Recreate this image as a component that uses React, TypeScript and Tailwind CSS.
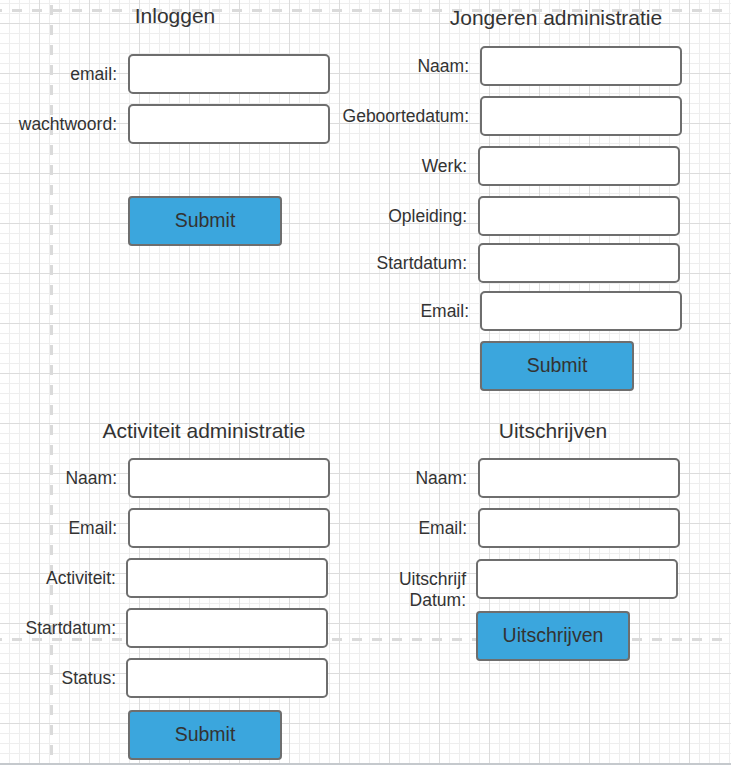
import React from "react";

function Field({ className = "" }: { className?: string }) {
  return (
    <div
      className={
        "h-[40px] w-[202px] shrink-0 rounded-[5px] border-2 border-[#6e6e6e] bg-white " +
        className
      }
    />
  );
}

function Row({
  label,
  labelClass,
  fieldClass,
  rowClass = "",
}: {
  label: string;
  labelClass: string;
  fieldClass: string;
  rowClass?: string;
}) {
  return (
    <div className={"flex items-center " + rowClass}>
      <div className={"shrink-0 text-right text-[17.5px] leading-[21px] text-[#333] " + labelClass}>
        {label}
      </div>
      <Field className={fieldClass} />
    </div>
  );
}

function Btn({ children, className = "" }: { children: React.ReactNode; className?: string }) {
  return (
    <div
      className={
        "flex h-[50px] w-[154px] items-center justify-center rounded-[4px] border-2 border-[#6e6e6e] bg-[#3ba6dd] text-[19.5px] text-[#333] " +
        className
      }
    >
      {children}
    </div>
  );
}

export default function App() {
  return (
    <div className="relative h-[765px] w-[731px] overflow-hidden bg-white font-['Liberation_Sans',Arial,sans-serif] bg-[image:linear-gradient(to_right,#dcdcdc_1px,transparent_1px),linear-gradient(to_bottom,#dcdcdc_1px,transparent_1px),linear-gradient(to_right,#eeeeee_1px,transparent_1px),linear-gradient(to_bottom,#eeeeee_1px,transparent_1px)] bg-[size:50px_50px,50px_50px,10px_10px,10px_10px] bg-[position:39px_23px,39px_23px,9px_3px,9px_3px]">
      {/* page boundary dashed lines */}
      <div className="absolute left-0 top-[9px] h-[3px] w-full bg-[image:linear-gradient(to_right,#dadada_50%,transparent_50%)] bg-[size:20px_3px] bg-[position:12px_0]" />
      <div className="absolute left-0 top-[638px] h-[3px] w-full bg-[image:linear-gradient(to_right,#dadada_50%,transparent_50%)] bg-[size:20px_3px] bg-[position:12px_0]" />
      <div className="absolute left-[50px] top-0 h-[763px] w-[3px] bg-[image:linear-gradient(to_bottom,#dadada_50%,transparent_50%)] bg-[size:3px_20px] bg-[position:0_5px]" />

      <div className="relative z-10 flex flex-col">
        {/* top row */}
        <div className="flex h-[410px]">
          {/* Inloggen */}
          <div className="flex w-[340px] flex-col">
            <div className="flex h-[32px] items-center justify-center pl-[10px] text-[21px] text-[#333]">
              Inloggen
            </div>
            <div className="mt-[22px] flex flex-col gap-[10px]">
              <Row label="email:" labelClass="w-[117px]" fieldClass="ml-[11px]" />
              <Row label="wachtwoord:" labelClass="w-[117px]" fieldClass="ml-[11px]" />
            </div>
            <Btn className="ml-[128px] mt-[52px]">Submit</Btn>
          </div>

          {/* Jongeren administratie */}
          <div className="flex w-[391px] flex-col">
            <div className="flex h-[36px] items-center justify-center pl-[41px] text-[21px] text-[#333]">
              Jongeren administratie
            </div>
            <div className="mt-[10px] flex flex-col">
              <Row label="Naam:" labelClass="w-[129px]" fieldClass="ml-[11px]" />
              <Row label="Geboortedatum:" labelClass="w-[129px]" fieldClass="ml-[11px]" rowClass="mt-[10px]" />
              <Row label="Werk:" labelClass="w-[127px]" fieldClass="ml-[11px]" rowClass="mt-[10px]" />
              <Row label="Opleiding:" labelClass="w-[127px]" fieldClass="ml-[11px]" rowClass="mt-[10px]" />
              <Row label="Startdatum:" labelClass="w-[127px]" fieldClass="ml-[11px]" rowClass="mt-[7px]" />
              <Row label="Email:" labelClass="w-[129px]" fieldClass="ml-[11px]" rowClass="mt-[8px]" />
            </div>
            <Btn className="ml-[140px] mt-[10px]">Submit</Btn>
          </div>
        </div>

        {/* bottom row */}
        <div className="flex">
          {/* Activiteit administratie */}
          <div className="flex w-[340px] flex-col">
            <div className="flex h-[42px] items-center justify-center pl-[68px] text-[21px] text-[#333]">
              Activiteit administratie
            </div>
            <div className="mt-[6px] flex flex-col gap-[10px]">
              <Row label="Naam:" labelClass="w-[117px]" fieldClass="ml-[11px]" />
              <Row label="Email:" labelClass="w-[117px]" fieldClass="ml-[11px]" />
              <Row label="Activiteit:" labelClass="w-[116px]" fieldClass="ml-[10px]" />
              <Row label="Startdatum:" labelClass="w-[116px]" fieldClass="ml-[10px]" />
              <Row label="Status:" labelClass="w-[116px]" fieldClass="ml-[10px]" />
            </div>
            <Btn className="ml-[128px] mt-[12px]">Submit</Btn>
          </div>

          {/* Uitschrijven */}
          <div className="flex w-[391px] flex-col">
            <div className="flex h-[42px] items-center justify-center pl-[35px] text-[21px] text-[#333]">
              Uitschrijven
            </div>
            <div className="mt-[6px] flex flex-col">
              <Row label="Naam:" labelClass="w-[127px]" fieldClass="ml-[11px]" />
              <Row label="Email:" labelClass="w-[127px]" fieldClass="ml-[11px]" rowClass="mt-[10px]" />
              <div className="mt-[11px] flex h-[40px] items-start">
                <div className="mt-[10px] w-[126px] shrink-0 text-right text-[17.5px] leading-[21px] text-[#333]">
                  Uitschrijf
                  <br />
                  Datum:
                </div>
                <Field className="ml-[10px]" />
              </div>
            </div>
            <Btn className="ml-[136px] mt-[12px]">Uitschrijven</Btn>
          </div>
        </div>
      </div>

      <div className="absolute bottom-0 left-0 h-[2px] w-full bg-[#c5c9cd]" />
    </div>
  );
}
